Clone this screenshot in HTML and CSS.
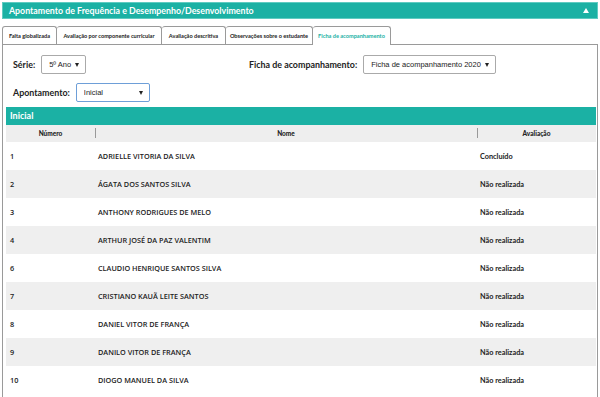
FILE: index.html
```html
<!DOCTYPE html>
<html lang="pt-BR">
<head>
  <meta charset="UTF-8">
  <meta name="viewport" content="width=device-width, initial-scale=1.0">
  <title>Apontamento de Frequência e Desempenho/Desenvolvimento</title>
  <link rel="stylesheet" href="styles.css">
</head>
<body>
  <div class="box">
    <div class="box-head">
      <span>Apontamento de Frequência e Desempenho/Desenvolvimento</span>
      <span class="toggle"></span>
    </div>

    <ul class="tabs">
      <li>Falta globalizada</li>
      <li>Avaliação por componente curricular</li>
      <li>Avaliação descritiva</li>
      <li>Observações sobre o estudante</li>
      <li class="active">Ficha de acompanhamento</li>
    </ul>

    <div class="panel">
      <div class="filters">
        <div class="field">
          <label>Série:</label>
          <span class="select s-serie"><select><option>5º Ano</option></select></span>
        </div>
        <div class="field">
          <label>Ficha de acompanhamento:</label>
          <span class="select s-ficha"><select><option>Ficha de acompanhamento 2020</option></select></span>
        </div>
        <div class="field">
          <label>Apontamento:</label>
          <span class="select s-apont focus"><select><option>Inicial</option></select></span>
        </div>
      </div>

      <div class="band">Inicial</div>
      <table>
        <thead>
          <tr>
            <th class="c-num">Número</th>
            <th class="c-nome">Nome</th>
            <th class="c-aval">Avaliação</th>
          </tr>
        </thead>
        <tbody id="rows"></tbody>
      </table>
    </div>
  </div>

  <script>
    const alunos = [
      [1, 'ADRIELLE VITORIA DA SILVA', 'Concluído'],
      [2, 'ÁGATA DOS SANTOS SILVA', 'Não realizada'],
      [3, 'ANTHONY RODRIGUES DE MELO', 'Não realizada'],
      [4, 'ARTHUR JOSÉ DA PAZ VALENTIM', 'Não realizada'],
      [6, 'CLAUDIO HENRIQUE SANTOS SILVA', 'Não realizada'],
      [7, 'CRISTIANO KAUÃ LEITE SANTOS', 'Não realizada'],
      [8, 'DANIEL VITOR DE FRANÇA', 'Não realizada'],
      [9, 'DANILO VITOR DE FRANÇA', 'Não realizada'],
      [10, 'DIOGO MANUEL DA SILVA', 'Não realizada']
    ];

    const rows = document.getElementById('rows');
    alunos.forEach(a => {
      const tr = document.createElement('tr');
      tr.innerHTML = `<td class="num">${a[0]}</td><td class="nome">${a[1]}</td><td class="aval">${a[2]}</td>`;
      rows.appendChild(tr);
    });
  </script>
</body>
</html>
```

FILE: styles.css
```css
html, body {
  margin: 0;
  padding: 0;
}
body {
  font-family: 'Lato', sans-serif;
  color: #222;
  background: #fff;
}
.box {
  padding: 2px 2px 0 2px;
}
.box-head {
  display: flex;
  justify-content: space-between;
  align-items: center;
  height: 15px;
  padding: 0 6px;
  background: #1bb1a4;
  border: 1px solid #5fcbc1;
  color: #fff;
  font-weight: 700;
  font-size: 8.8px;
}
.toggle {
  width: 0;
  height: 0;
  border-left: 3px solid transparent;
  border-right: 3px solid transparent;
  border-bottom: 5px solid #fff;
  margin-right: 2px;
}
.tabs {
  display: flex;
  list-style: none;
  margin: 7px 0 0 0;
  padding: 0;
}
.tabs li {
  box-sizing: border-box;
  height: 18px;
  line-height: 18px;
  padding: 0 2px;
  border: 1px solid #9a9a9a;
  border-bottom: none;
  border-left: none;
  border-radius: 3px 3px 0 0;
  font-size: 5.6px;
  font-weight: 700;
  color: #222;
  background: #fff;
  white-space: nowrap;
  overflow: hidden;
  text-align: center;
}
.tabs li:first-child {
  border-left: 1px solid #9a9a9a;
}
.tabs li:nth-child(1) { width: 55px; }
.tabs li:nth-child(2) { width: 105px; }
.tabs li:nth-child(3) { width: 64px; }
.tabs li:nth-child(4) { width: 87px; }
.tabs li.active {
  width: 78px;
  color: #1bb1a4;
  height: 19px;
  margin-bottom: -1px;
  position: relative;
}
.panel {
  border: 1px solid #9a9a9a;
  border-bottom: none;
  padding: 10px 1px 0 3px;
  height: 360px;
}
.filters {
  display: grid;
  grid-template-columns: 236px 1fr;
  row-gap: 9px;
  padding-left: 7px;
  margin-bottom: 5px;
}
.field {
  display: flex;
  align-items: center;
  gap: 6px;
}
.field label {
  font-size: 8.9px;
  font-weight: 700;
}
.select {
  position: relative;
  display: block;
  height: 19px;
}
.select select {
  appearance: none;
  -webkit-appearance: none;
  display: block;
  height: 19px;
  width: 100%;
  border: 1px solid #aaa;
  border-radius: 2px;
  background: #fff;
  font-family: 'Liberation Sans', Arial, sans-serif;
  font-size: 7.5px;
  color: #222;
  padding: 0 0 0 7px;
  outline: none;
}
.select::after {
  content: '';
  position: absolute;
  right: 7px;
  top: 8px;
  width: 0;
  height: 0;
  border-left: 2.5px solid transparent;
  border-right: 2.5px solid transparent;
  border-top: 4px solid #222;
  pointer-events: none;
}
.s-serie { width: 45px; }
.s-ficha { width: 133px; }
.s-apont { width: 74px; }
.select.focus select {
  border-color: #6e9fd8;
}
.band {
  background: #1bb1a4;
  color: #fff;
  font-weight: 700;
  font-size: 9px;
  height: 18px;
  line-height: 18px;
  padding-left: 4px;
}
table {
  width: 100%;
  border-collapse: collapse;
  font-size: 7.3px;
}
th {
  background: #eeeeee;
  height: 17px;
  font-size: 6.5px;
  font-weight: 900;
  position: relative;
  padding: 0;
}
th + th::before {
  content: '';
  position: absolute;
  left: 0;
  top: 3px;
  height: 10px;
  border-left: 1px solid #999;
}
.c-num { width: 89px; }
.c-aval { width: 119px; }
td {
  height: 28px;
  padding: 0;
}
tbody tr:nth-child(even) td {
  background: #efefef;
}
.num, .nome {
  font-family: 'Open Sans', sans-serif;
  font-weight: 600;
}
.num {
  padding-left: 4px;
}
.nome {
  padding-left: 3px;
}
.aval {
  font-weight: 700;
  padding-left: 3px;
}
```
